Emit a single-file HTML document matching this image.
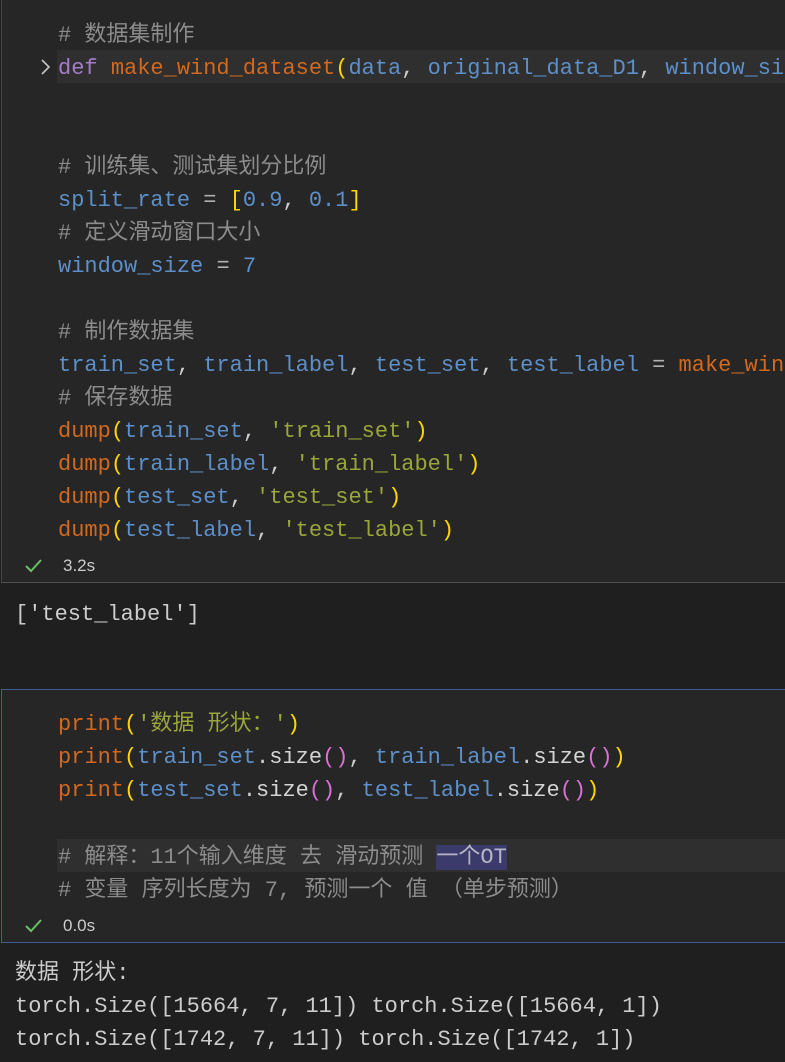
<!DOCTYPE html>
<html><head><meta charset="utf-8"><style>
body{margin:0;width:785px;height:1062px;background:#1f1f1f;overflow:hidden;position:relative;font-family:"Liberation Mono","Noto Sans CJK SC",monospace;}
.cell{position:absolute;left:1px;width:800px;background:#262626;}
.l{position:absolute;left:58px;white-space:pre;font-size:22px;line-height:33px;height:33px;color:#cccccc;}
.o{position:absolute;left:15px;white-space:pre;font-size:22px;line-height:33px;color:#cccccc;}
.c{color:#8c8c8c}.v{color:#5d8fc9}.f{color:#d2691e}.s{color:#9aa53a}.y{color:#ffd700}.m{color:#da70d6}.k{color:#a47cc9}.p{color:#b0b0b0}.w{color:#d4d4d4}
.st{position:absolute;left:63px;font-family:"Liberation Sans",sans-serif;font-size:17px;color:#cccccc;}
.ck{position:absolute;left:24px;}
</style></head><body>
<div class="cell" style="top:0;height:582px;border-left:1px solid #454545;border-bottom:1px solid #505050;"></div>
<div style="position:absolute;left:57px;top:50px;width:728px;height:33px;background:#2f2f2f"></div>
<div class="l c" style="top:19px"># 数据集制作</div>
<svg style="position:absolute;left:40px;top:58px" width="12" height="18"><path d="M2 2 L9 9 L2 16" stroke="#c5c5c5" stroke-width="1.6" fill="none"/></svg>
<div class="l" style="top:52px"><span class="k">def</span> <span class="f">make_wind_dataset</span><span class="y">(</span><span class="v">data</span>, <span class="v">original_data_D1</span>, <span class="v">window_si</span></div>
<div class="l c" style="top:151px"># 训练集、测试集划分比例</div>
<div class="l" style="top:184px"><span class="v">split_rate</span> <span class="p">=</span> <span class="y">[</span><span class="v">0.9</span>, <span class="v">0.1</span><span class="y">]</span></div>
<div class="l c" style="top:217px"># 定义滑动窗口大小</div>
<div class="l" style="top:250px"><span class="v">window_size</span> <span class="p">=</span> <span class="v">7</span></div>
<div class="l c" style="top:316px"># 制作数据集</div>
<div class="l" style="top:349px"><span class="v">train_set</span>, <span class="v">train_label</span>, <span class="v">test_set</span>, <span class="v">test_label</span> <span class="p">=</span> <span class="f">make_win</span></div>
<div class="l c" style="top:382px"># 保存数据</div>
<div class="l" style="top:415px"><span class="f">dump</span><span class="y">(</span><span class="v">train_set</span>, <span class="s">'train_set'</span><span class="y">)</span></div>
<div class="l" style="top:448px"><span class="f">dump</span><span class="y">(</span><span class="v">train_label</span>, <span class="s">'train_label'</span><span class="y">)</span></div>
<div class="l" style="top:481px"><span class="f">dump</span><span class="y">(</span><span class="v">test_set</span>, <span class="s">'test_set'</span><span class="y">)</span></div>
<div class="l" style="top:514px"><span class="f">dump</span><span class="y">(</span><span class="v">test_label</span>, <span class="s">'test_label'</span><span class="y">)</span></div>
<svg class="ck" style="top:557px" width="20" height="18"><path d="M2 9 L7 14 L17 3" stroke="#6abf69" stroke-width="2" fill="none"/></svg>
<div class="st" style="top:556px">3.2s</div>
<div class="o" style="top:598px">['test_label']</div>

<div class="cell" style="top:689px;height:252px;border:1px solid #3e5a9a;border-right:none;"></div>
<div class="l" style="top:708px"><span class="f">print</span><span class="y">(</span><span class="s">'数据 形状：'</span><span class="y">)</span></div>
<div class="l" style="top:741px"><span class="f">print</span><span class="y">(</span><span class="v">train_set</span>.<span class="w">size</span><span class="m">()</span>, <span class="v">train_label</span>.<span class="w">size</span><span class="m">()</span><span class="y">)</span></div>
<div class="l" style="top:774px"><span class="f">print</span><span class="y">(</span><span class="v">test_set</span>.<span class="w">size</span><span class="m">()</span>, <span class="v">test_label</span>.<span class="w">size</span><span class="m">()</span><span class="y">)</span></div>
<div style="position:absolute;left:57px;top:839px;width:728px;height:33px;background:#2f2f2f"></div>
<div class="l c" style="top:841px"># 解释：11个输入维度 去 滑动预测 <span style="color:#b5b5c8;background:#3b3b6b">一个OT</span></div>
<div class="l c" style="top:874px"># 变量 序列长度为 7, 预测一个 值 （单步预测）</div>
<svg class="ck" style="top:917px" width="20" height="18"><path d="M2 9 L7 14 L17 3" stroke="#6abf69" stroke-width="2" fill="none"/></svg>
<div class="st" style="top:916px">0.0s</div>
<div class="o" style="top:957px">数据 形状:</div>
<div class="o" style="top:990px">torch.Size([15664, 7, 11]) torch.Size([15664, 1])</div>
<div class="o" style="top:1023px">torch.Size([1742, 7, 11]) torch.Size([1742, 1])</div>
</body></html>
